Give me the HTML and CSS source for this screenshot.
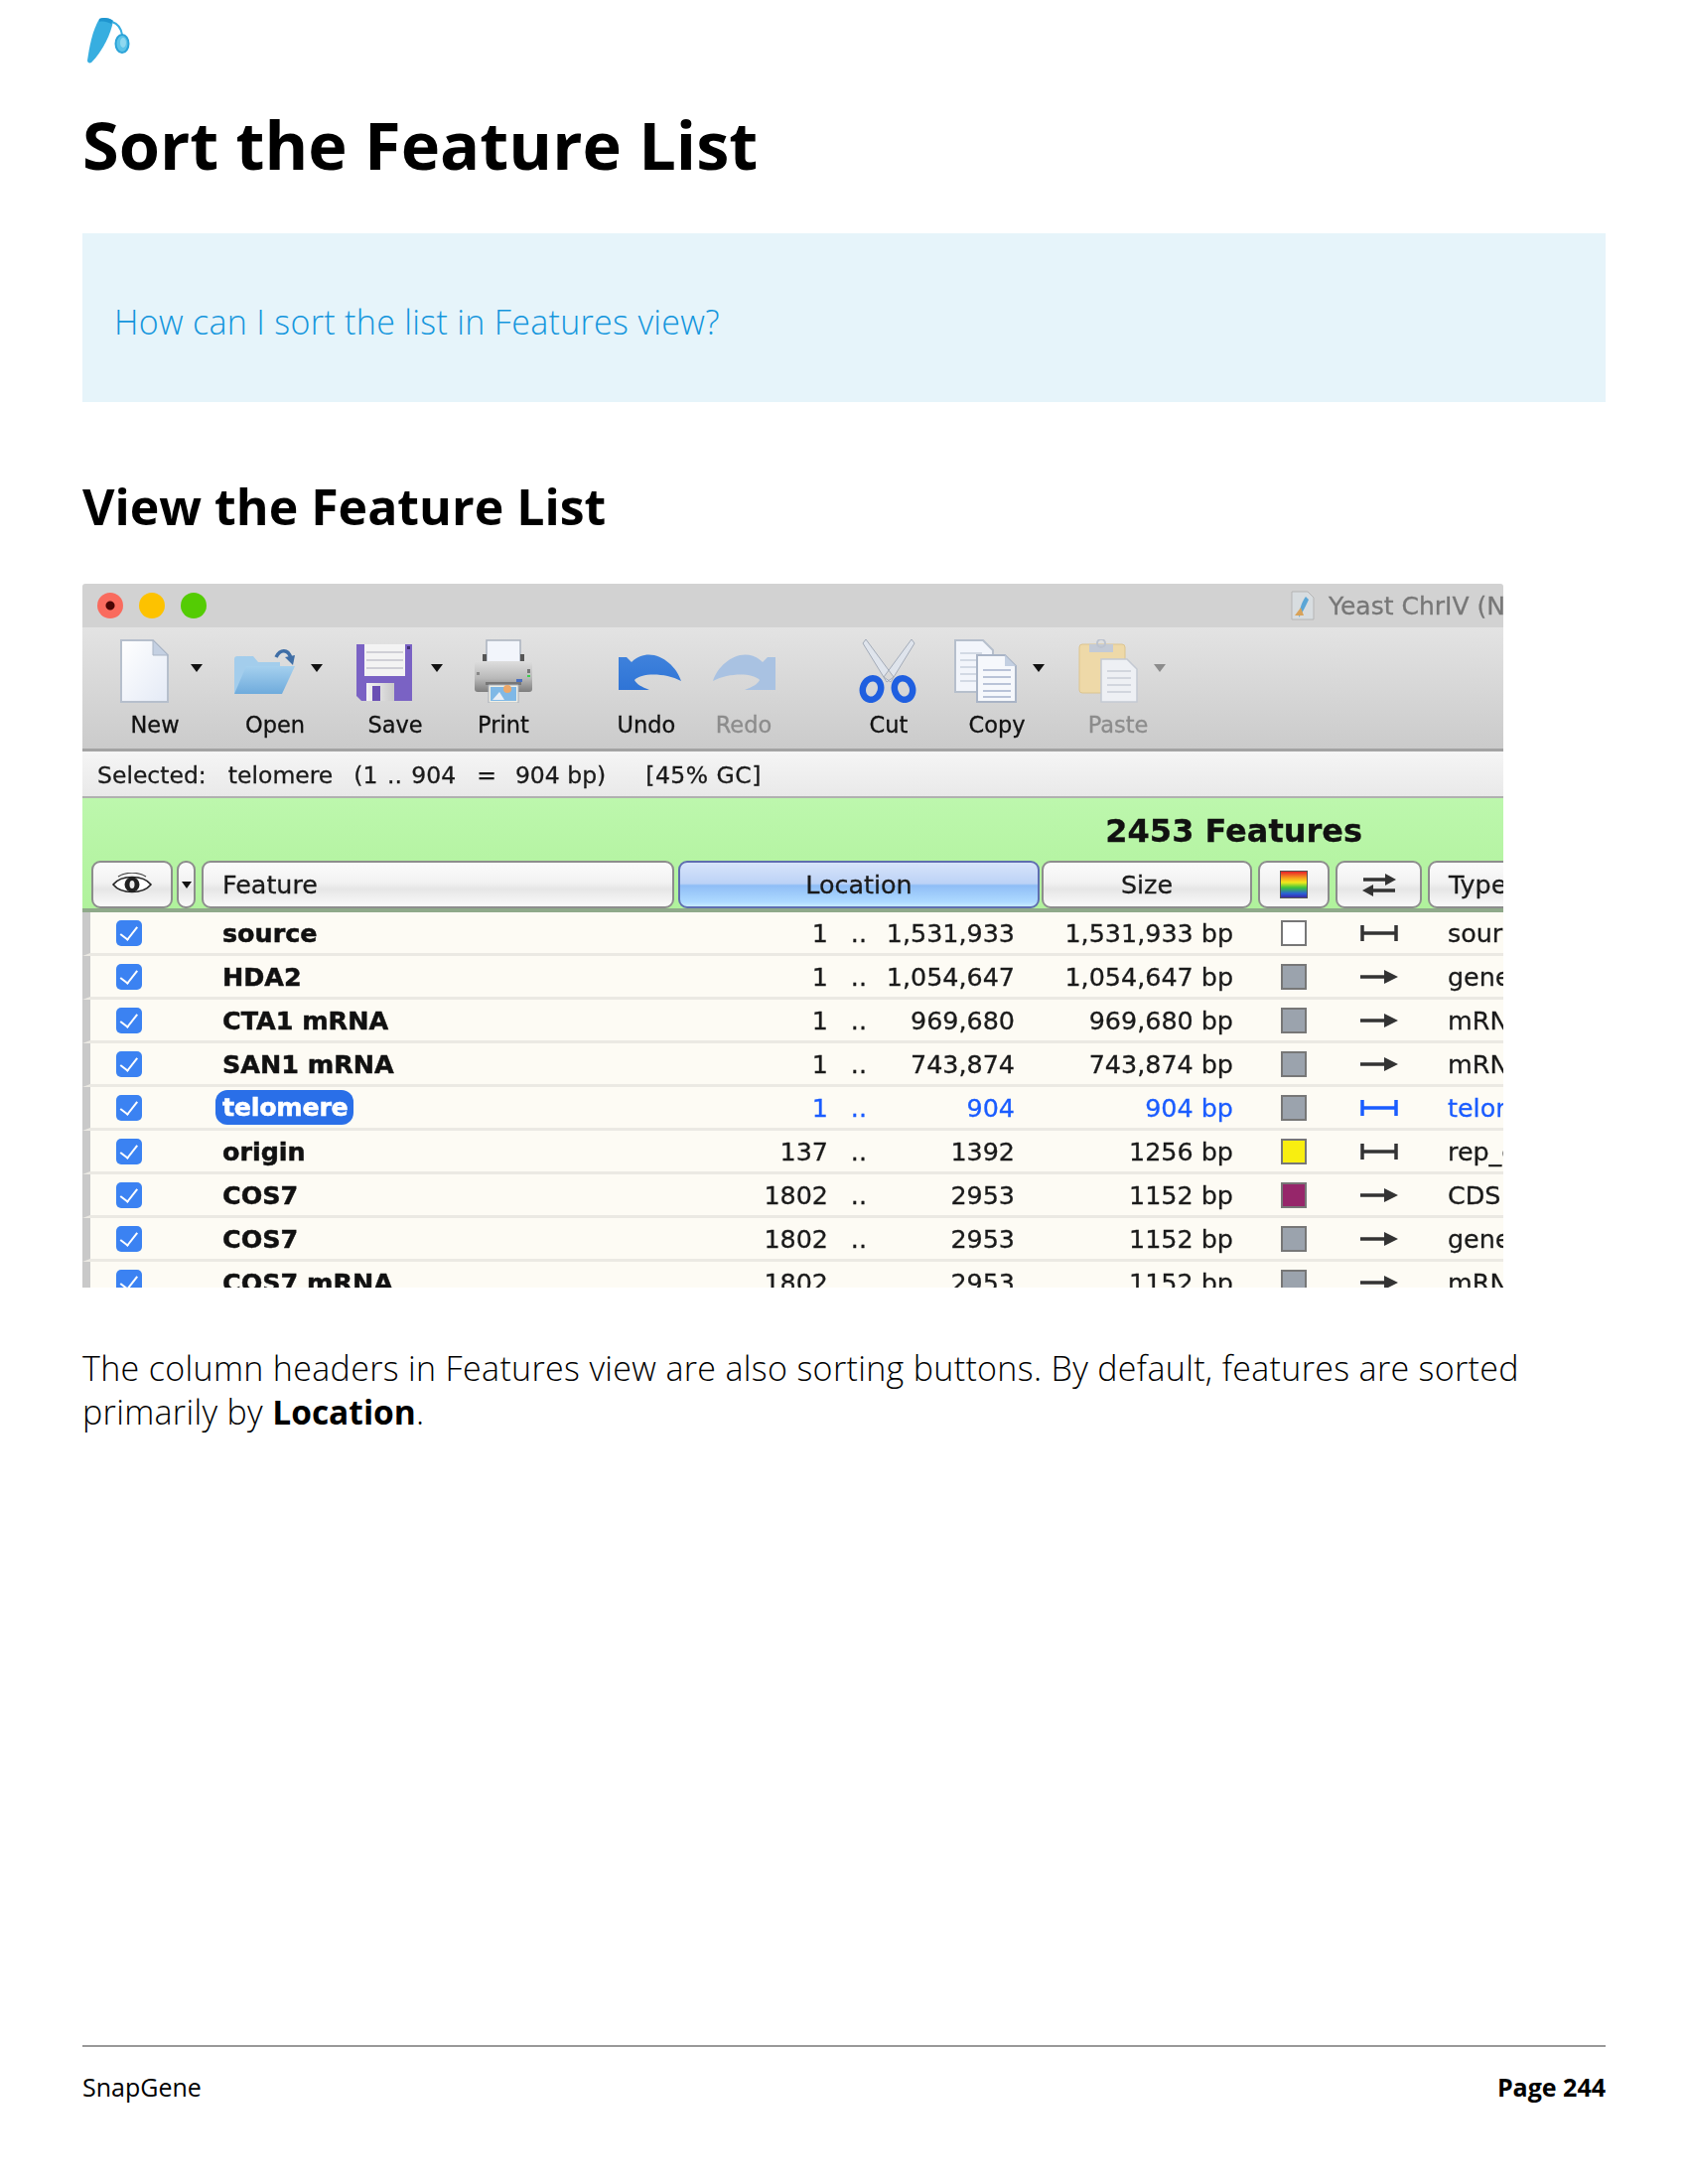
FILE: index.html
```html
<!DOCTYPE html>
<html lang="en">
<head>
  <meta charset="UTF-8" />
  <title>Sort the Feature List</title>
  <link rel="stylesheet" href="styles.css">
</head>
<body>
  <svg width="0" height="0" class="defs">
    <defs>
      <linearGradient id="paper" x1="0" y1="0" x2="1" y2="1">
        <stop offset="0" stop-color="#ffffff"/><stop offset="1" stop-color="#e4eaf6"/>
      </linearGradient>
      <linearGradient id="folder" x1="0" y1="0" x2="0" y2="1">
        <stop offset="0" stop-color="#a5d0ee"/><stop offset="1" stop-color="#6fabdc"/>
      </linearGradient>
      <linearGradient id="arrowblue" x1="0" y1="0" x2="0" y2="1">
        <stop offset="0" stop-color="#3f82dc"/><stop offset="1" stop-color="#2f74d6"/>
      </linearGradient>
      <linearGradient id="printer" x1="0" y1="0" x2="0" y2="1">
        <stop offset="0" stop-color="#dedede"/><stop offset=".55" stop-color="#b9b9b9"/><stop offset="1" stop-color="#7d7d7d"/>
      </linearGradient>
      <linearGradient id="shutter" x1="0" y1="0" x2="1" y2="0">
        <stop offset="0" stop-color="#f4f4f4"/><stop offset="1" stop-color="#c9c9c9"/>
      </linearGradient>
      <symbol id="strand-fwd" viewBox="0 0 38 20">
        <path d="M0 10h26" stroke="currentColor" stroke-width="3.5"/><path d="M24 3l14 7-14 7z" fill="currentColor"/>
      </symbol>
      <symbol id="strand-both" viewBox="0 0 38 20">
        <path d="M2 10h34M2 2v16M36 2v16" stroke="currentColor" stroke-width="3.5" fill="none"/>
      </symbol>
    </defs>
  </svg>

  <!-- tube logo -->
  <svg class="logo" viewBox="0 0 48 52">
    <path d="M15 4c5-2 11-1 14 2-2 12-10 30-22 42-2 1-4 0-4-2C5 32 8 16 15 4z" fill="#37aee0"/>
    <path d="M15 4c4-2 10-1 14 2l-2 3c-4-2-8-3-12-2z" fill="#1f95cf"/>
    <path d="M28 7c6 2 9 7 10 13" stroke="#37aee0" stroke-width="2" fill="none"/>
    <ellipse cx="38" cy="29" rx="6.5" ry="9" fill="#5cc3e8" stroke="#2ba3d8" stroke-width="2"/>
    <ellipse cx="39" cy="28" rx="3" ry="5" fill="#8fd8f0"/>
  </svg>

  <h1>Sort the Feature List</h1>

  <div class="callout">How can I sort the list in Features view?</div>

  <h2>View the Feature List</h2>

  <div class="shot">
    <div class="titlebar">
      <span class="light red"></span>
      <span class="light yellow"></span>
      <span class="light green"></span>
      <svg class="doc-icon" viewBox="0 0 26 30">
        <path d="M2 1h16l6 6v22H2z" fill="#d8dde0" stroke="#b5b5b5"/>
        <path d="M9 27c1-9 3-16 7-21l3 3c-3 6-6 13-10 18z" fill="#5aa6d6"/>
        <path d="M5 25l6-8 3 8z" fill="#d9a35a"/>
      </svg>
      <span class="window-name">Yeast ChrIV (NC_001136)</span>
    </div>

    <div class="toolbar">
      <div class="tool tool-new has-menu">
        <svg viewBox="-8 0 64 64"><path d="M1 1h32l15 15v47H1z" fill="url(#paper)" stroke="#b6bfcc" stroke-width="2"/><path d="M33 1v15h15z" fill="#c4d0e2" stroke="#aab5c6"/></svg>
        <span class="caret"></span>
        <span>New</span>
      </div>
      <div class="tool tool-open has-menu">
        <svg viewBox="0 0 64 64">
          <path d="M2 54V20q0-3 3-3h16l5 6h22v31z" fill="#a3cdec"/>
          <path d="M2 55l12-28h49L50 55z" fill="url(#folder)"/>
          <path d="M44 18c4-8 12-9 15 1" stroke="#3f6ea6" stroke-width="3.5" fill="none"/><path d="M53 18l10-2-2 10z" fill="#3f6ea6"/>
        </svg>
        <span class="caret"></span>
        <span>Open</span>
      </div>
      <div class="tool tool-save has-menu">
        <svg viewBox="0 0 64 64">
          <path d="M4 5h56v57H9l-5-5z" fill="#7a62c4"/>
          <path d="M12 5h41v32H12z" fill="#f3f3f3"/>
          <path d="M14 13h37M14 21h37M14 29h37" stroke="#cfcfd6" stroke-width="2"/>
          <path d="M55 7h3v3h-3z" fill="#3d2f70"/>
          <path d="M14 44h28v18H14z" fill="url(#shutter)"/>
          <path d="M20 47h8v15h-8z" fill="#6a4fb4"/>
        </svg>
        <span class="caret"></span>
        <span>Save</span>
      </div>
      <div class="tool tool-print">
        <svg viewBox="0 0 64 64">
          <path d="M15 1h34v22H15z" fill="#f2f5fb" stroke="#aab2bf" stroke-width="1.5"/>
          <path d="M11 15h4v8h-4zM49 15h4v8h-4z" fill="#555"/>
          <path d="M3 22h58v28q0 3-3 3H6q-3 0-3-3z" fill="url(#printer)"/>
          <path d="M14 43h36v3H14z" fill="#777"/>
          <path d="M56 30h3v4h-3z" fill="#777"/><path d="M56 36h3v2h-3z" fill="#3ccf4e"/><path d="M5 33h3v3H5z" fill="#888"/>
          <path d="M45 40h6v3h-6z" fill="#4a6fc0"/>
          <path d="M17 46h30v18H17z" fill="#f0f0e6" stroke="#a8aeb8"/>
          <path d="M19 48h26v14H19z" fill="#7fb8e6"/><path d="M21 61l7-8 5 8z" fill="#e8eef6"/><circle cx="36" cy="50" r="4" fill="#eda868"/>
        </svg>
        <span>Print</span>
      </div>
      <div class="tool tool-undo">
        <svg viewBox="0 0 64 64" class="nudge">
          <path d="M0 17v33h31c-8-3-13-6-15-10 6-7 30-8 47 1C57 22 32 4 13 22L8 17z" fill="url(#arrowblue)" transform="translate(0 1)"/>
        </svg>
        <span>Undo</span>
      </div>
      <div class="tool tool-redo disabled">
        <svg viewBox="0 0 64 64">
          <path d="M64 17v33H33c8-3 13-6 15-10C42 33 18 32 1 41 7 22 32 4 51 22l5-5z" fill="#a9c2e2" transform="translate(0 1)"/>
        </svg>
        <span>Redo</span>
      </div>
      <div class="tool tool-cut">
        <svg viewBox="0 0 64 64">
          <path d="M9 0l28 38-7 5L6 4zM55 0L27 38l7 5L58 4z" fill="#dfe4ec" stroke="#a3abb8"/>
          <ellipse cx="15" cy="50" rx="9" ry="11" fill="none" stroke="#1f5fe0" stroke-width="6.5" transform="rotate(18 15 50)"/>
          <ellipse cx="47" cy="50" rx="9" ry="11" fill="none" stroke="#1f5fe0" stroke-width="6.5" transform="rotate(-18 47 50)"/>
        </svg>
        <span>Cut</span>
      </div>
      <div class="tool tool-copy has-menu">
        <svg viewBox="0 0 64 64">
          <path d="M1 1h28l10 10v42H1z" fill="#f2f5fb" stroke="#b6bfcc" stroke-width="2"/>
          <path d="M6 14h22M6 21h22M6 28h22M6 35h22M6 42h22" stroke="#d2d9e4" stroke-width="2"/>
          <path d="M23 16h28l11 11v36H23z" fill="#f6f8fc" stroke="#a9b4c6" stroke-width="2"/>
          <path d="M51 16v11h11z" fill="#c4d0e2"/>
          <path d="M29 31h28M29 38h28M29 45h28M29 52h28M29 58h28" stroke="#b9c3d8" stroke-width="2"/>
        </svg>
        <span class="caret"></span>
        <span>Copy</span>
      </div>
      <div class="tool tool-paste has-menu disabled">
        <svg viewBox="-2 0 64 64">
          <path d="M2 8q0-3 3-3h40q3 0 3 3v46H5q-3 0-3-3z" fill="#eed9a8" stroke="#dcc48e"/>
          <path d="M12 5h24v8H12z" fill="#c3cad6"/><circle cx="24" cy="4" r="4" fill="none" stroke="#bcc3cf" stroke-width="2"/>
          <path d="M24 20h26l10 10v33H24z" fill="#eef0f4" stroke="#c4c9d2" stroke-width="1.5"/>
          <path d="M30 32h24M30 39h24M30 46h24M30 53h24" stroke="#d2d6de" stroke-width="2"/>
        </svg>
        <span class="caret"></span>
        <span>Paste</span>
      </div>
    </div>

    <div class="status">
      <span class="st-label">Selected:</span>
      <span class="st-name">telomere</span>
      <span class="st-range">(1 .. 904</span>
      <span class="st-eq">=</span>
      <span class="st-size">904 bp)</span>
      <span class="st-gc">[45% GC]</span>
    </div>

    <div class="list-head">
      <div class="count">2453 Features</div>
      <div class="columns">
        <div class="col col-eye">
          <svg viewBox="0 0 40 24" width="40" height="24">
            <path d="M1 12C9 2 31 2 39 12 31 22 9 22 1 12z" fill="#fff" stroke="#222" stroke-width="1.6"/>
            <path d="M6 4C14-1 26-1 34 4" stroke="#444" stroke-width="1.2" fill="none"/>
            <circle cx="20" cy="12" r="7.5" fill="#222"/><ellipse cx="20" cy="12" rx="2.5" ry="4" fill="#eee"/>
          </svg>
        </div>
        <div class="col col-drop"><span class="caret small"></span></div>
        <div class="col col-feature">Feature</div>
        <div class="col col-location">Location</div>
        <div class="col col-size">Size</div>
        <div class="col col-color"><span class="rainbow"></span></div>
        <div class="col col-strand">
          <svg viewBox="0 0 36 24" width="36" height="24">
            <path d="M2 7h24" stroke="#333" stroke-width="3.5"/><path d="M24 1l11 6-11 6z" fill="#333"/>
            <path d="M10 18h24" stroke="#333" stroke-width="3.5"/><path d="M12 12L1 18l11 6z" fill="#333"/>
          </svg>
        </div>
        <div class="col col-type">Type</div>
      </div>
    </div>

    <div class="rows">
      <div class="row">
        <span class="check"></span><span class="name">source</span><span class="num">1</span><span class="dots">..</span><span class="num">1,531,933</span><span class="num">1,531,933 bp</span>
        <span class="swatch white"></span><svg class="strand"><use href="#strand-both"/></svg><span class="type">source</span>
      </div>
      <div class="row">
        <span class="check"></span><span class="name">HDA2</span><span class="num">1</span><span class="dots">..</span><span class="num">1,054,647</span><span class="num">1,054,647 bp</span>
        <span class="swatch"></span><svg class="strand"><use href="#strand-fwd"/></svg><span class="type">gene</span>
      </div>
      <div class="row">
        <span class="check"></span><span class="name">CTA1 mRNA</span><span class="num">1</span><span class="dots">..</span><span class="num">969,680</span><span class="num">969,680 bp</span>
        <span class="swatch"></span><svg class="strand"><use href="#strand-fwd"/></svg><span class="type">mRNA</span>
      </div>
      <div class="row">
        <span class="check"></span><span class="name">SAN1 mRNA</span><span class="num">1</span><span class="dots">..</span><span class="num">743,874</span><span class="num">743,874 bp</span>
        <span class="swatch"></span><svg class="strand"><use href="#strand-fwd"/></svg><span class="type">mRNA</span>
      </div>
      <div class="row selected">
        <span class="check"></span><span class="name"><b>telomere</b></span><span class="num">1</span><span class="dots">..</span><span class="num">904</span><span class="num">904 bp</span>
        <span class="swatch"></span><svg class="strand"><use href="#strand-both"/></svg><span class="type">telomere</span>
      </div>
      <div class="row">
        <span class="check"></span><span class="name">origin</span><span class="num">137</span><span class="dots">..</span><span class="num">1392</span><span class="num">1256 bp</span>
        <span class="swatch yellow"></span><svg class="strand"><use href="#strand-both"/></svg><span class="type">rep_origin</span>
      </div>
      <div class="row">
        <span class="check"></span><span class="name">COS7</span><span class="num">1802</span><span class="dots">..</span><span class="num">2953</span><span class="num">1152 bp</span>
        <span class="swatch purple"></span><svg class="strand"><use href="#strand-fwd"/></svg><span class="type">CDS</span>
      </div>
      <div class="row">
        <span class="check"></span><span class="name">COS7</span><span class="num">1802</span><span class="dots">..</span><span class="num">2953</span><span class="num">1152 bp</span>
        <span class="swatch"></span><svg class="strand"><use href="#strand-fwd"/></svg><span class="type">gene</span>
      </div>
      <div class="row">
        <span class="check"></span><span class="name">COS7 mRNA</span><span class="num">1802</span><span class="dots">..</span><span class="num">2953</span><span class="num">1152 bp</span>
        <span class="swatch"></span><svg class="strand"><use href="#strand-fwd"/></svg><span class="type">mRNA</span>
      </div>
    </div>
  </div>

  <p class="body-text">The column headers in Features view are also sorting buttons. By default, features are sorted primarily by <strong>Location</strong>.</p>

  <div class="footer">
    <span>SnapGene</span>
    <strong>Page 244</strong>
  </div>
</body>
</html>
```

FILE: styles.css
```css
* {
  box-sizing: border-box;
}
body {
  font-family: "Open Sans", sans-serif;
  margin: 0;
  padding: 15px 83px 0;
  width: 1700px;
  height: 2200px;
  background: #fff;
  color: #000;
  display: flex;
  flex-direction: column;
  overflow: hidden;
}
.defs {
  position: absolute;
}
.logo {
  width: 48px;
  height: 52px;
  flex: none;
  margin-left: 2px;
}
h1 {
  font-size: 66.7px;
  line-height: 96px;
  font-weight: 700;
  margin: 31px 0 41px;
}
.callout {
  background: #e6f4fa;
  color: #1496dd;
  font-size: 34px;
  font-weight: 300;
  letter-spacing: 0.31px;
  line-height: 46px;
  height: 170px;
  padding: 66px 32px 0;
}
h2 {
  font-size: 50px;
  line-height: 66px;
  font-weight: 700;
  margin: 72px 0 45px;
}
.body-text {
  font-size: 34px;
  font-weight: 300;
  letter-spacing: 0.33px;
  line-height: 43.5px;
  margin: 60px 0 0;
}
.body-text strong {
  font-size: 33.5px;
  font-weight: 700;
  letter-spacing: 0;
}
.footer {
  margin-top: auto;
  margin-bottom: 80px;
  border-top: 2px solid #999;
  padding-top: 22px;
  display: flex;
  justify-content: space-between;
  font-size: 25px;
  line-height: 36px;
}

/* screenshot of the app */
.shot {
  width: 1431px;
  height: 709px;
  overflow: hidden;
  flex: none;
  font-family: "DejaVu Sans", sans-serif;
  filter: blur(0.6px);
  color: #1a1a1a;
  -webkit-text-stroke: 0.3px;
}
.titlebar {
  height: 44px;
  background: #d2d2d2;
  display: flex;
  align-items: center;
  padding-left: 15px;
  white-space: nowrap;
  border-radius: 3px 3px 0 0;
}
.light {
  width: 26px;
  height: 26px;
  border-radius: 50%;
  margin-right: 16px;
  flex: none;
}
.light.red {
  background: radial-gradient(circle, #4a0604 0 4px, #f96b5e 5px);
}
.light.yellow {
  background: #fdc200;
}
.light.green {
  background: #54cc04;
}
.doc-icon {
  width: 26px;
  height: 30px;
  margin-left: 1075px;
  flex: none;
}
.window-name {
  font-size: 25px;
  color: #777;
  margin-left: 13px;
}
.toolbar {
  height: 125px;
  background: linear-gradient(#e3e3e3, #cbcbcb);
  border-bottom: 3px solid #a3a3a3;
  display: flex;
  padding-left: 28px;
  padding-top: 12px;
}
.tool {
  width: 90px;
  flex: none;
  display: flex;
  flex-direction: column;
  align-items: center;
  position: relative;
  font-size: 22.5px;
  line-height: 32px;
  color: #111;
}
.tool svg {
  width: 64px;
  height: 64px;
  margin-bottom: 6px;
  flex: none;
}
.tool.has-menu svg {
  margin-right: 22px;
}
.tool svg.nudge {
  margin-left: 8px;
}
.tool.disabled {
  color: #8c8c8c;
}
.tool-open { margin-left: 31px; }
.tool-save { margin-left: 31px; }
.tool-print { margin-left: 19px; }
.tool-undo { margin-left: 54px; }
.tool-redo { margin-left: 8px; }
.tool-cut { margin-left: 56px; }
.tool-copy { margin-left: 19px; }
.tool-paste { margin-left: 32px; }
.caret {
  width: 0;
  height: 0;
  border-left: 6px solid transparent;
  border-right: 6px solid transparent;
  border-top: 8px solid #111;
}
.tool .caret {
  position: absolute;
  left: 81px;
  top: 25px;
}
.tool.disabled .caret {
  border-top-color: #8c8c8c;
}
.status {
  height: 47px;
  background: linear-gradient(#f5f5f5, #e9e9e9);
  border-bottom: 2px solid #b0b0b0;
  display: flex;
  align-items: center;
  font-size: 23.5px;
  white-space: nowrap;
  padding: 2px 0 0 15px;
}
.st-name { margin-left: 22px; }
.st-range { margin-left: 21px; word-spacing: 2px; }
.st-eq { margin-left: 21px; }
.st-size { margin-left: 19px; }
.st-gc { margin-left: 40px; letter-spacing: 0.5px; }
.list-head {
  height: 115px;
  background: linear-gradient(#bdf7ad, #b0f29c);
  border-bottom: 4px solid #8fa98a;
  overflow: hidden;
}
.count {
  height: 63px;
  text-align: right;
  padding: 13px 142px 0 0;
  font-size: 32px;
  line-height: 40px;
  font-weight: 700;
  color: #111;
}
.columns {
  display: flex;
  height: 48px;
  padding-left: 9px;
  gap: 7px;
  font-size: 25.4px;
  line-height: 44px;
  margin-right: -40px;
}
.col {
  flex: none;
  background: linear-gradient(#fbfbfb 0, #f2f2f2 45%, #e6e6e6 60%, #fafafa 100%);
  border: 2px solid #8d8d8d;
  border-radius: 9px;
  display: flex;
  align-items: center;
  justify-content: center;
}
.col-eye { width: 82px; margin-right: -3px; }
.col-drop { width: 19px; margin-right: -1px; }
.col-feature { width: 476px; margin-right: -3px; justify-content: flex-start; padding-left: 19px; }
.col-location {
  width: 364px;
  margin-right: -5px;
  background: linear-gradient(#d7e4fa 0, #bcd2f6 48%, #8fbdf6 52%, #aedaff 90%, #c8ecff 100%);
  border-color: #5f6eb0;
}
.col-size { width: 212px; margin-right: -1px; }
.col-color { width: 72px; margin-right: -1px; }
.col-strand { width: 87px; margin-right: -1px; }
.col-type { width: 120px; justify-content: flex-start; padding-left: 19px; }
.caret.small {
  border-left-width: 5px;
  border-right-width: 5px;
  border-top-width: 7px;
}
.rainbow {
  width: 28px;
  height: 28px;
  border: 1px solid #555;
  background: linear-gradient(#e8222a, #f6a21e 25%, #f2ea1c 42%, #3cc43c 62%, #2a5fd8 85%, #3a2aa8);
}
.row {
  height: 44px;
  display: grid;
  grid-template-columns: 133px 479px 131px 39px 149px 220px 74px 92px 107px;
  align-items: center;
  background: #fdfbf4;
  border-left: 8px solid #c9c9c9;
  border-bottom: 3px solid #ebe9e3;
  font-size: 25.4px;
  white-space: nowrap;
  overflow: hidden;
  color: #1a1a1a;
}
.check {
  width: 26px;
  height: 26px;
  margin-left: 26px;
  background: #3b82f2;
  border-radius: 5px;
  display: flex;
  align-items: center;
  justify-content: center;
}
.check::after {
  content: "";
  width: 8px;
  height: 15px;
  border-right: 2.5px solid #fff;
  border-bottom: 2.5px solid #fff;
  transform: rotate(38deg) translate(-1px, -1px);
}
.name {
  font-weight: 700;
  color: #111;
  -webkit-text-stroke: 0.5px;
}
.num {
  text-align: right;
}
.dots {
  text-align: right;
}
.swatch {
  width: 26px;
  height: 26px;
  justify-self: end;
  background: #9ba3ad;
  border: 2px solid #777;
}
.swatch.white { background: #fff; }
.swatch.yellow { background: #f8ee10; }
.swatch.purple { background: #96266a; }
.strand {
  width: 38px;
  height: 20px;
  justify-self: end;
  color: #333;
}
.type {
  padding-left: 50px;
}
.row.selected {
  color: #1a5cff;
}
.row.selected .strand {
  color: #1a5cff;
}
.row.selected .name b {
  display: inline-block;
  background: #2a6fe8;
  color: #fff;
  border-radius: 12px;
  line-height: 35px;
  padding: 0 5px 0 7px;
  margin-left: -7px;
  letter-spacing: -0.3px;
}
```
